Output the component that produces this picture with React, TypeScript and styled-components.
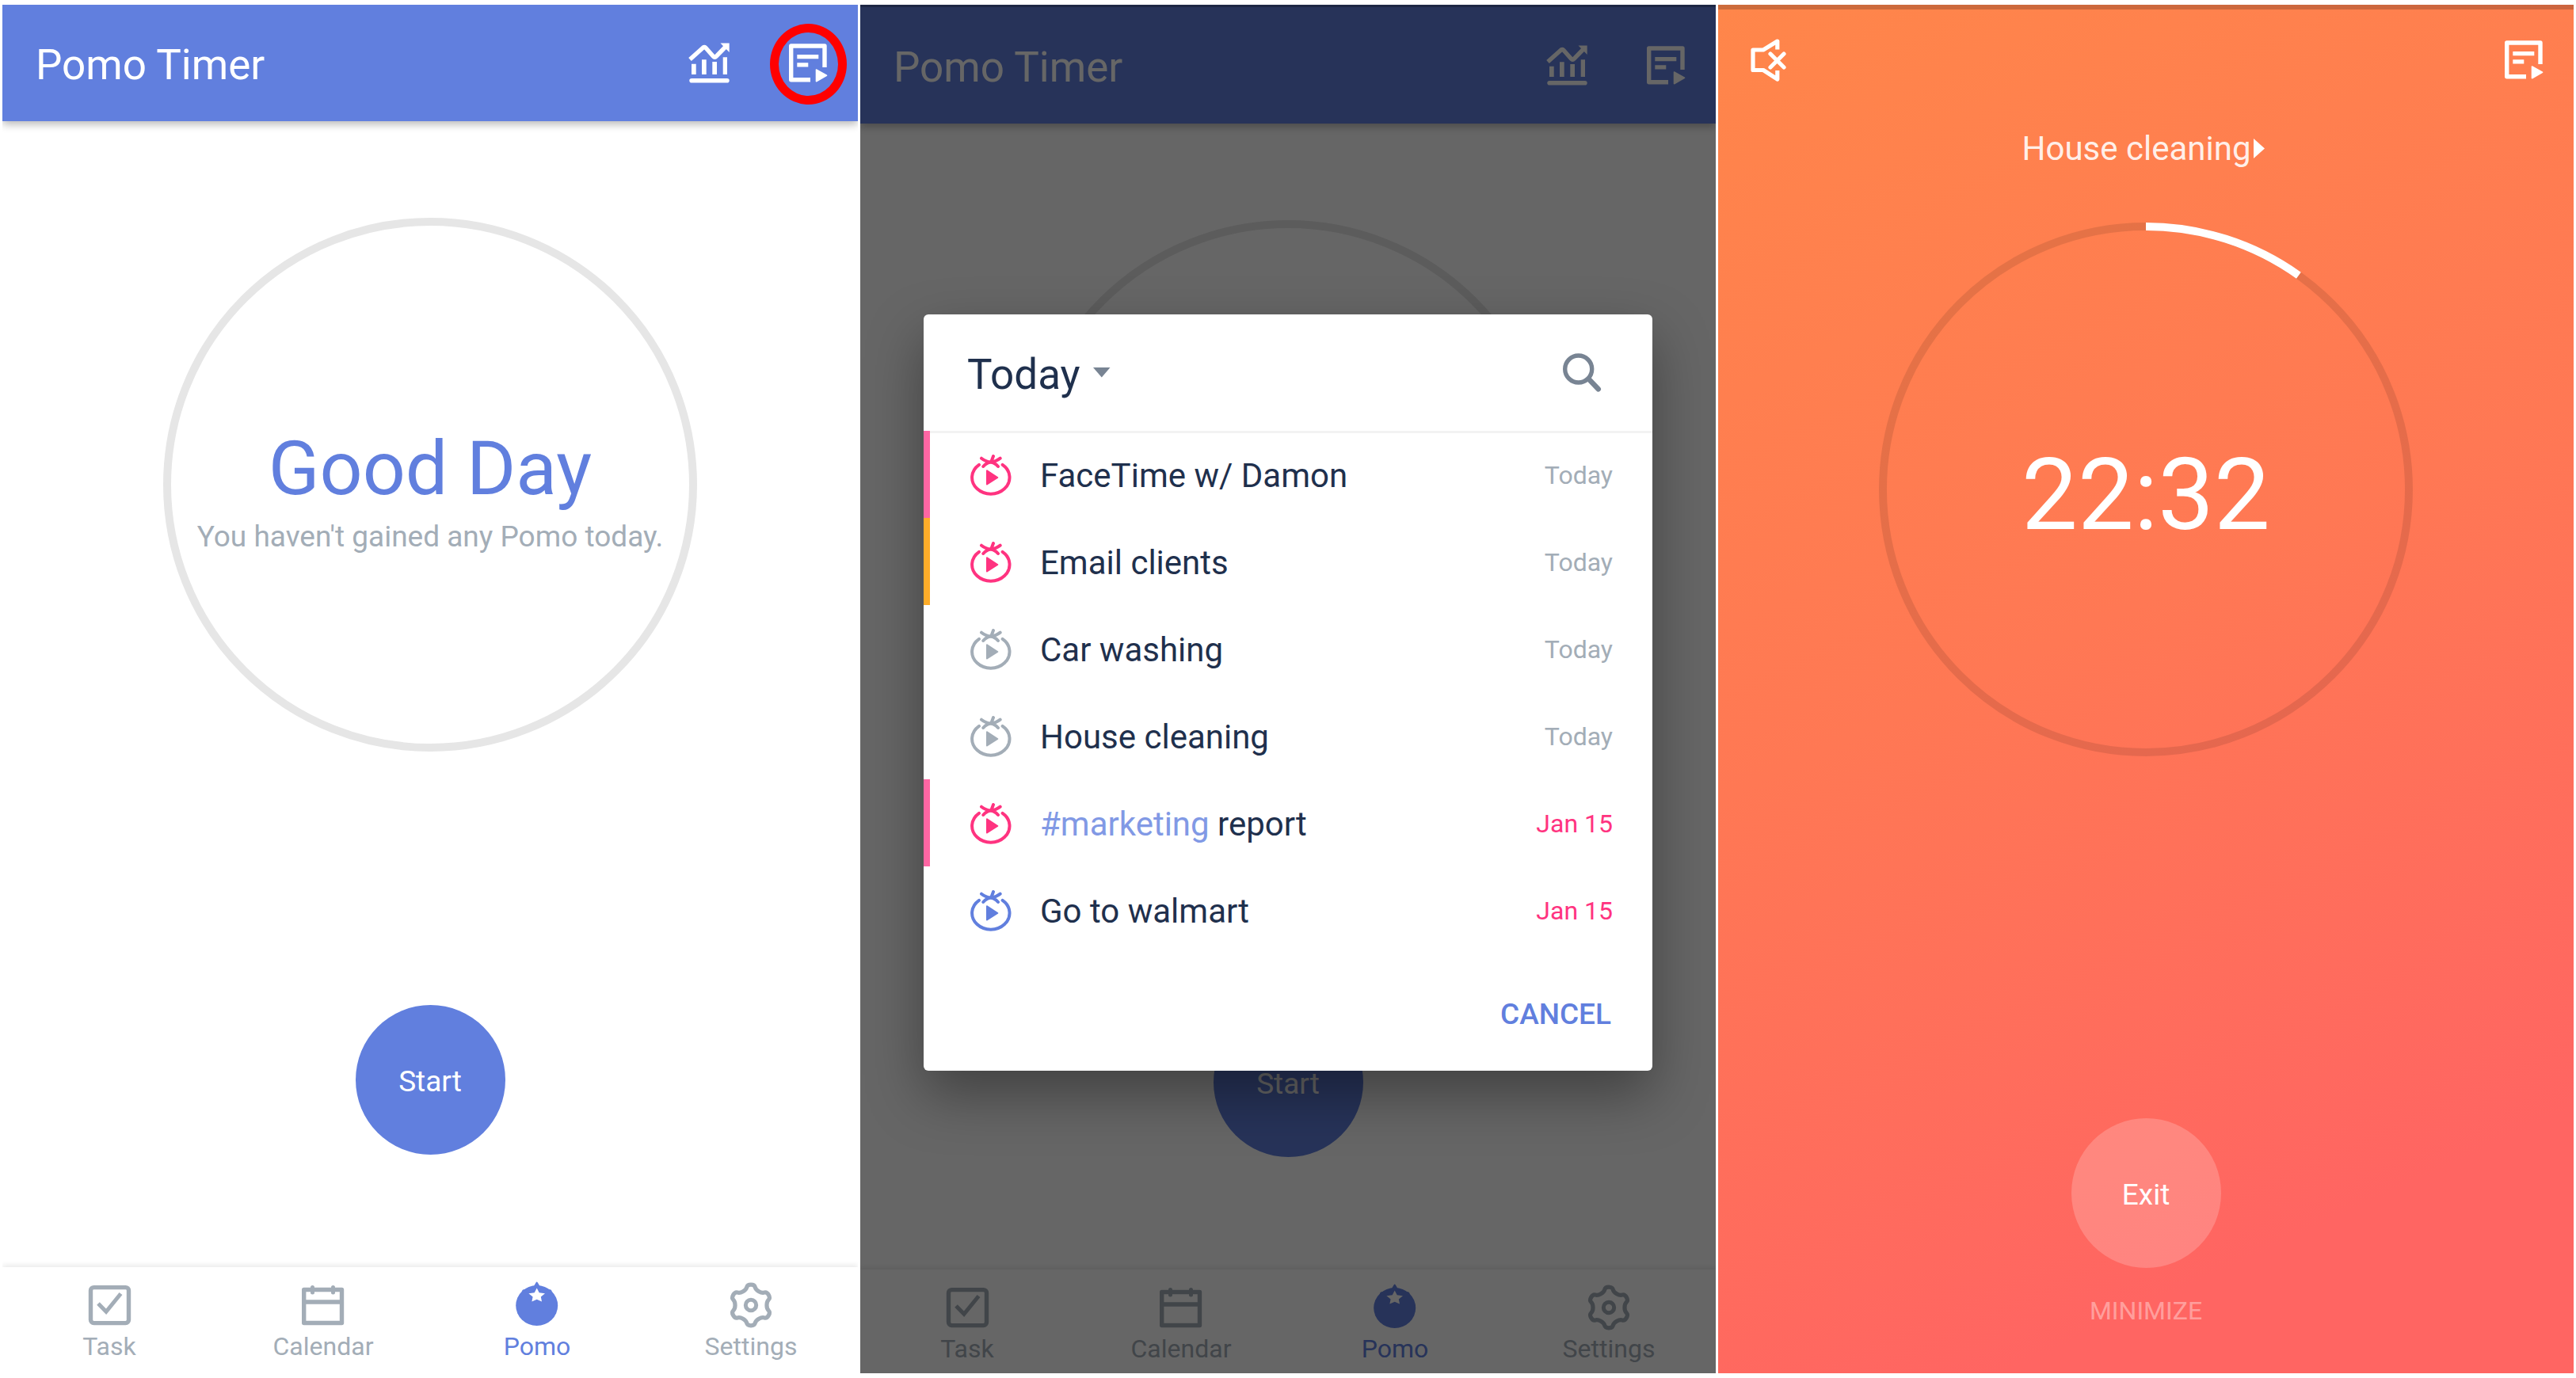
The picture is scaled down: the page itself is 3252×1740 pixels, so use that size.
import React from "react";
import styled, { createGlobalStyle } from "styled-components";

const color = {
  blue: "#617fde",
  tag: "#8199e5",
  ink: "#1f304d",
  slate: "#788493",
  muted: "#a3adb7",
  pink: "#ff3380",
  pinkBar: "#ff66a3",
  amberBar: "#ffad29",
  track: "#e6e6e6",
};

const GlobalStyle = createGlobalStyle`
  *, *::before, *::after { box-sizing: border-box; }
  body {
    margin: 0;
    background: #fff;
    font-family: Roboto, "Noto Sans", sans-serif;
  }
  button, select {
    margin: 0;
    padding: 0;
    border: 0;
    background: none;
    color: inherit;
    font: inherit;
    cursor: pointer;
  }
  h1, h2, p, ul { margin: 0; padding: 0; font-weight: 400; }
  svg { display: block; flex: none; }
`;

const Gallery = styled.main`
  display: grid;
  grid-template-columns: repeat(3, minmax(0, 1fr));
  gap: 3px;
  min-height: 100vh;
  padding: 6px 3px;
`;

const Screen = styled.section`
  position: relative;
  display: flex;
  flex-direction: column;
  overflow: hidden;
  background: #fff;
`;

const FocusScreen = styled(Screen)`
  align-items: center;
  background: linear-gradient(155deg, #ff864a 0%, #ff7854 45%, #ff6562 85%, #ff6562 100%);
  color: #fff;
`;

const StatusStrip = styled.div<{ $height: number; $fill: string }>`
  flex: none;
  align-self: stretch;
  height: ${(p) => p.$height}px;
  background: ${(p) => p.$fill};
`;

const AppBar = styled.header`
  display: flex;
  align-items: center;
  gap: 75px;
  height: 147px;
  padding: 0 38px 0 42px;
  background: ${color.blue};
  color: #fff;
  box-shadow: 0 4px 10px rgba(0, 0, 0, 0.28);
`;

const AppTitle = styled.h1`
  flex: 1;
  padding-top: 4px;
  font-size: 53px;
  line-height: 64px;
`;

const IconButton = styled.button`
  position: relative;
  display: flex;
`;

const Highlight = styled.span`
  position: absolute;
  inset: -25px -24px -28px;
  border: 11px solid #f00;
  border-radius: 50%;
`;

const Body = styled.div`
  flex: 1;
  display: flex;
  flex-direction: column;
  align-items: center;
  gap: 320px;
  padding-top: 122px;
`;

const Ring = styled.div`
  display: flex;
  flex-direction: column;
  align-items: center;
  justify-content: center;
  width: 674px;
  height: 674px;
  border: 10px solid ${color.track};
  border-radius: 50%;
`;

const Greeting = styled.h2`
  color: ${color.blue};
  font-size: 95px;
  line-height: 132px;
`;

const Summary = styled.p`
  color: ${color.muted};
  font-size: 37px;
  line-height: 40px;
`;

const RoundButton = styled.button<{ $fill: string }>`
  width: 189px;
  height: 189px;
  padding-top: 4px;
  border-radius: 50%;
  background: ${(p) => p.$fill};
  color: #fff;
  font-size: 37px;
`;

const TabBar = styled.nav<{ $tight?: boolean }>`
  display: grid;
  grid-template-columns: repeat(4, 1fr);
  padding: 18px 0 ${(p) => (p.$tight ? 8 : 11)}px;
  background: #fff;
  box-shadow: 0 -3px 6px rgba(0, 0, 0, 0.08);
`;

const Tab = styled.a<{ $active?: boolean }>`
  display: flex;
  flex-direction: column;
  align-items: center;
  color: ${(p) => (p.$active ? color.blue : color.muted)};
  font-size: 32px;
  line-height: 45px;
  text-decoration: none;
`;

const Scrim = styled.div`
  position: absolute;
  inset: 0;
  display: flex;
  align-items: center;
  justify-content: center;
  padding: 9px 80px 0;
  background: rgba(0, 0, 0, 0.6);
`;

const Dialog = styled.div`
  flex: 1;
  border-radius: 6px;
  background: #fff;
  box-shadow: 0 30px 70px rgba(0, 0, 0, 0.36);
`;

const DialogHeader = styled.div`
  display: flex;
  align-items: center;
  justify-content: space-between;
  height: 147px;
  padding: 0 64px 0 55px;
`;

const Picker = styled.label`
  display: flex;
  align-items: center;
  gap: 16px;
  color: ${color.slate};
`;

const PickerSelect = styled.select`
  appearance: none;
  padding-top: 4px;
  color: ${color.ink};
  font-size: 53px;
  line-height: 64px;
`;

const TaskList = styled.ul`
  list-style: none;
  box-shadow: inset 0 3px #f2f2f2;
`;

const TaskRow = styled.li<{ $bar?: string }>`
  border-left: 8px solid ${(p) => p.$bar ?? "transparent"};
`;

const TaskButton = styled.button`
  display: flex;
  align-items: center;
  width: 100%;
  height: 110px;
  padding: 2px 50px 0 51px;
  text-align: left;
`;

const TaskName = styled.span`
  flex: 1;
  padding-left: 36px;
  color: ${color.ink};
  font-size: 42px;
`;

const Tag = styled.span`
  color: ${color.tag};
`;

const TaskDate = styled.span<{ $late?: boolean }>`
  color: ${(p) => (p.$late ? color.pink : color.muted)};
  font-size: 32px;
`;

const DialogFooter = styled.div`
  display: flex;
  justify-content: flex-end;
  height: 148px;
  padding: 4px 52px 0;
`;

const CancelButton = styled.button`
  color: ${color.blue};
  font-size: 37px;
  font-weight: 500;
`;

const FocusBar = styled.header`
  display: flex;
  align-self: stretch;
  align-items: center;
  justify-content: space-between;
  height: 127px;
  padding: 0 38px 0 41px;
`;

const FocusTask = styled.button`
  display: flex;
  align-items: center;
  gap: 4px;
  height: 96px;
  font-size: 42px;
  color: rgba(255, 255, 255, 0.9);
`;

const Dial = styled.div`
  display: grid;
  margin: 46px 0 457px;
  place-items: center;
  > * { grid-area: 1 / 1; }
`;

const Clock = styled.p`
  padding-top: 14px;
  font-size: 126px;
`;

const MinimizeButton = styled.button`
  margin-top: 30px;
  color: rgba(255, 255, 255, 0.4);
  font-size: 32px;
  line-height: 48px;
`;

const strokeProps = {
  fill: "none",
  stroke: "currentColor",
  strokeLinecap: "round",
  strokeLinejoin: "round",
} as const;

function ChartIcon() {
  return (
    <svg width="52" height="52" viewBox="0 0 52 52" fill="currentColor" aria-hidden="true">
      <path d="M2 21 18.500 6.200Q20.200 4.800 21.800 6.200L31.500 17.200Q33.300 19.200 35.200 17.200L47 5" {...strokeProps} strokeLinecap="butt" strokeWidth="5.400" />
      <path d="M40.500 .5H51.700V12Z" />
      <path d="M4 26.700h5.700V40H4zM17 21.300h5.700V40H17zM30.300 24H36v16h-5.700zM43.700 18.300H49V40h-5.300z" />
      <rect x="1.300" y="45" width="50.400" height="5.600" rx="2.800" />
    </svg>
  );
}

function ListPlayIcon() {
  return (
    <svg width="49" height="49" viewBox="0 0 49 49" fill="currentColor" aria-hidden="true">
      <path d="M45 30V3H2.700V45.700H27" {...strokeProps} strokeLinecap="butt" strokeWidth="5.400" />
      <path d="M10.300 14h27v5.300h-27zM10.300 24.300h14v5.300h-14z" />
      <path d="M34.500 33 47.500 40.300 34.500 47.700Z" stroke="currentColor" strokeWidth="1.600" strokeLinejoin="round" />
    </svg>
  );
}

function MuteIcon() {
  return (
    <svg width="45" height="56" viewBox="0 0 45 56" aria-hidden="true">
      <path d="M33.800 14.500V4L16 15H3V40.500H16L33.800 52V41" {...strokeProps} strokeLinecap="butt" strokeWidth="5.200" />
      <path d="M25 20 42 37M42 20 25 37" {...strokeProps} strokeWidth="5.200" />
    </svg>
  );
}

function SearchIcon() {
  return (
    <svg width="49" height="49" viewBox="0 0 49 49" color={color.slate} aria-hidden="true">
      <circle cx="19.700" cy="20" r="17" {...strokeProps} strokeWidth="5.400" />
      <path d="M33 33 44.700 45.300" {...strokeProps} strokeWidth="6.600" />
    </svg>
  );
}

function TomatoIcon({ tint }: { tint: string }) {
  return (
    <svg width="52" height="52" viewBox="0 0 52 52" color={tint} aria-hidden="true">
      <path
        d="M11 12.800A23.700 20.700 0 1 0 40.600 12.800M14 4.700Q25.700 14 37.700 4.700M16.300 15Q25.700 4.500 35 15M29 2 26.400 9"
        {...strokeProps}
        strokeWidth="4"
      />
      <path d="M21 20.300 34.300 29 21 37.500Z" fill="currentColor" stroke="currentColor" strokeWidth="2" strokeLinejoin="round" />
    </svg>
  );
}

function TaskIcon() {
  return (
    <svg width="60" height="60" viewBox="0 0 60 60" aria-hidden="true">
      <rect x="6.500" y="7.600" width="48" height="45" rx="4" {...strokeProps} strokeWidth="5.400" />
      <path d="M16 28 26 38.300 44.500 15.500" {...strokeProps} strokeLinecap="butt" strokeLinejoin="miter" strokeWidth="5" />
    </svg>
  );
}

function CalendarIcon() {
  return (
    <svg width="60" height="60" viewBox="0 0 60 60" aria-hidden="true">
      <path d="M5.700 10.500H53.500V52.500H5.700ZM5.700 26H53.500" {...strokeProps} strokeWidth="5.400" />
      <path d="M16.500 7.500V14M42.500 7.500V14" {...strokeProps} strokeWidth="5" />
    </svg>
  );
}

function PomoIcon() {
  return (
    <svg width="60" height="60" viewBox="0 0 60 60" fill="currentColor" aria-hidden="true">
      <ellipse cx="29.700" cy="30.500" rx="26.500" ry="25.500" />
      <path d="M29.700 .5Q30.900 .8 34.800 8.700L46.500 10.300Q49.500 11 48 15H11.500Q10 11 13 10.300L24.600 8.700Q28.500 .8 29.700 .5Z" />
      <path fill="#fff" d="M29.700 8.500 32.700 14.300 40 15.200 34.800 19.600 36 25.500 29.700 22.800 23.400 25.500 24.600 19.600 19.400 15.200 26.700 14.300Z" />
    </svg>
  );
}

/** Closed curve with six rounded teeth, smoothed through the midpoints of its corners. */
function gearPath(center: number, tooth: number, valley: number) {
  const corners: [number, number][] = [];
  for (let i = 0; i < 6; i += 1) {
    const profile = [[-10, tooth], [10, tooth], [17, valley], [43, valley]];
    profile.forEach(([offset, radius]) => {
      const a = ((i * 60 + offset) * Math.PI) / 180;
      corners.push([center + radius * Math.sin(a), center - radius * Math.cos(a)]);
    });
  }
  const mid = (i: number) => {
    const a = corners[i % corners.length];
    const b = corners[(i + 1) % corners.length];
    return `${((a[0] + b[0]) / 2).toFixed(2)} ${((a[1] + b[1]) / 2).toFixed(2)}`;
  };
  const curves = corners.map((_, i) => {
    const c = corners[(i + 1) % corners.length];
    return `Q${c[0].toFixed(2)} ${c[1].toFixed(2)} ${mid(i + 1)}`;
  });
  return `M${mid(0)}${curves.join("")}Z`;
}

function GearIcon() {
  return (
    <svg width="60" height="60" viewBox="0 0 60 60" aria-hidden="true">
      <path d={gearPath(30, 26.200, 20.500)} {...strokeProps} strokeWidth="5.200" />
      <circle cx="30" cy="30" r="6.700" {...strokeProps} strokeWidth="5" />
    </svg>
  );
}

const tabs = [
  { label: "Task", icon: <TaskIcon /> },
  { label: "Calendar", icon: <CalendarIcon /> },
  { label: "Pomo", icon: <PomoIcon />, active: true },
  { label: "Settings", icon: <GearIcon /> },
];

interface Task {
  name: React.ReactNode;
  date: string;
  tint: string;
  bar?: string;
  late?: boolean;
}

const tasks: Task[] = [
  { name: "FaceTime w/ Damon", date: "Today", tint: color.pink, bar: color.pinkBar },
  { name: "Email clients", date: "Today", tint: color.pink, bar: color.amberBar },
  { name: "Car washing", date: "Today", tint: color.muted },
  { name: "House cleaning", date: "Today", tint: color.muted },
  { name: <><Tag>#marketing</Tag> report</>, date: "Jan 15", tint: color.pink, bar: color.pinkBar, late: true },
  { name: "Go to walmart", date: "Jan 15", tint: color.blue, late: true },
];

interface TimerHomeProps {
  highlighted?: boolean;
  tight?: boolean;
  children?: React.ReactNode;
}

function TimerHome({ highlighted, tight, children }: TimerHomeProps) {
  return (
    <>
      <AppBar>
        <AppTitle>Pomo Timer</AppTitle>
        <IconButton aria-label="Statistics"><ChartIcon /></IconButton>
        <IconButton aria-label="Choose task">
          <ListPlayIcon />
          {highlighted && <Highlight />}
        </IconButton>
      </AppBar>
      <Body>
        <Ring>{children}</Ring>
        <RoundButton $fill={color.blue}>Start</RoundButton>
      </Body>
      <TabBar $tight={tight}>
        {tabs.map((tab) => (
          <Tab key={tab.label} href="#" $active={tab.active}>
            {tab.icon}
            {tab.label}
          </Tab>
        ))}
      </TabBar>
    </>
  );
}

function TaskDialog() {
  return (
    <Dialog role="dialog" aria-label="Choose a task">
      <DialogHeader>
        <Picker>
          <PickerSelect aria-label="List" defaultValue="Today">
            <option>Today</option>
          </PickerSelect>
          <svg width="22" height="13" viewBox="0 0 22 13" aria-hidden="true">
            <path d="M0 0H21.500L10.800 12.500Z" fill="currentColor" />
          </svg>
        </Picker>
        <IconButton aria-label="Search"><SearchIcon /></IconButton>
      </DialogHeader>
      <TaskList>
        {tasks.map((task, i) => (
          <TaskRow key={i} $bar={task.bar}>
            <TaskButton>
              <TomatoIcon tint={task.tint} />
              <TaskName>{task.name}</TaskName>
              <TaskDate $late={task.late}>{task.date}</TaskDate>
            </TaskButton>
          </TaskRow>
        ))}
      </TaskList>
      <DialogFooter>
        <CancelButton>CANCEL</CancelButton>
      </DialogFooter>
    </Dialog>
  );
}

function ProgressRing({ done }: { done: number }) {
  const radius = 332;
  const angle = done * 2 * Math.PI;
  const x = 337 + radius * Math.sin(angle);
  const y = 337 - radius * Math.cos(angle);
  return (
    <svg width="674" height="674" viewBox="0 0 674 674" fill="none" strokeWidth="10" aria-hidden="true">
      <circle cx="337" cy="337" r={radius} stroke="rgba(0,0,0,0.1)" />
      <path d={`M337 5A${radius} ${radius} 0 0 1 ${x} ${y}`} stroke="#fff" />
    </svg>
  );
}

export default function App() {
  return (
    <>
      <GlobalStyle />
      <Gallery>
        <Screen>
          <TimerHome highlighted>
            <Greeting>Good Day</Greeting>
            <Summary>You haven't gained any Pomo today.</Summary>
          </TimerHome>
        </Screen>
        <Screen>
          <StatusStrip $height={3} $fill="#4e66b2" />
          <TimerHome tight />
          <Scrim>
            <TaskDialog />
          </Scrim>
        </Screen>
        <FocusScreen>
          <StatusStrip $height={6} $fill="rgba(0, 0, 0, 0.2)" />
          <FocusBar>
            <IconButton aria-label="Unmute"><MuteIcon /></IconButton>
            <IconButton aria-label="Choose task"><ListPlayIcon /></IconButton>
          </FocusBar>
          <FocusTask>
            House cleaning
            <svg width="20" height="25" viewBox="0 0 20 25" aria-hidden="true">
              <path d="M0 0 14 12.500 0 25Z" fill="#fff" />
            </svg>
          </FocusTask>
          <Dial>
            <ProgressRing done={148 / 1500} />
            <Clock>22:32</Clock>
          </Dial>
          <RoundButton $fill="rgba(255, 255, 255, 0.2)">Exit</RoundButton>
          <MinimizeButton>MINIMIZE</MinimizeButton>
        </FocusScreen>
      </Gallery>
    </>
  );
}
